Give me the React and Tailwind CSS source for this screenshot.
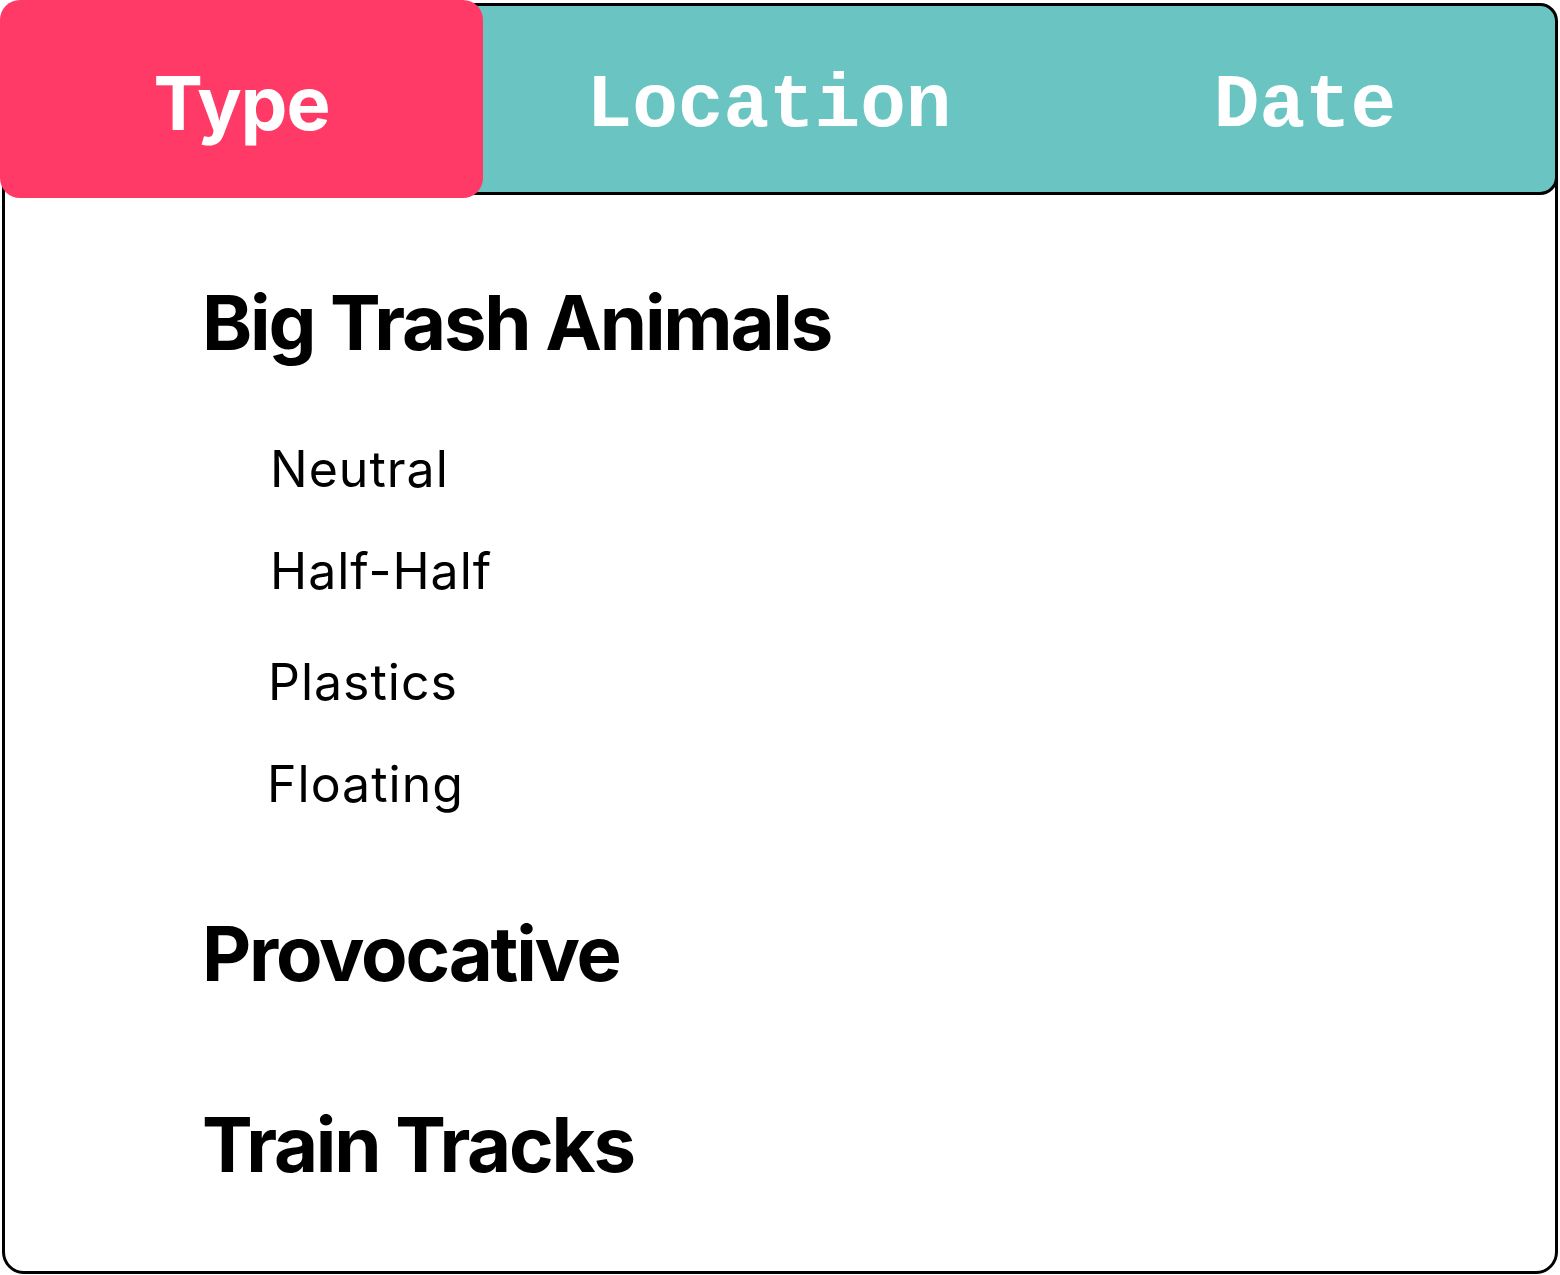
import React from 'react';

const tabs = [
  { label: "Type", width: "w-[483px]", active: true },
  { label: "Location", width: "w-[572px]" },
  { label: "Date", width: "flex-1" },
];

const subItems = [
  { label: "Neutral", cls: "mt-[84px] ml-[68px]" },
  { label: "Half-Half", cls: "mt-[52px] ml-[68px]" },
  { label: "Plastics", cls: "mt-[61px] ml-[66px]" },
  { label: "Floating", cls: "mt-[52px] ml-[65px]" },
];

const heading = "text-[76px] leading-none font-bold tracking-[-2.2px] text-black font-['Inter',sans-serif]";
const item = "text-[50px] leading-none font-normal tracking-[1px] text-black font-['Inter',sans-serif]";

export default function App() {
  return (
    <div className="w-[1560px] h-[1275px] bg-white pt-[3px] px-[2px] pb-[1px]">
      <div className="h-full border-[3px] border-black rounded-[22px] bg-white flex flex-col">
        {/* tab bar */}
        <div className="-m-[3px] h-[192px] border-[3px] border-black rounded-[18px] bg-[#6ac4c1] flex">
          {tabs.map(t =>
            t.active ? (
              <div
                key={t.label}
                className="-ml-[5px] -mt-[6px] h-[198px] w-[483px] shrink-0 rounded-[20px] bg-[#ff3a66] flex items-center justify-center pt-[8px]"
              >
                <span className="text-white text-[74px] font-bold leading-none tracking-[-1px] font-['Inter',sans-serif]">{t.label}</span>
              </div>
            ) : (
              <div key={t.label} className={`${t.width} flex items-center justify-center pt-[14px]`}>
                <span className="text-white text-[76px] font-bold leading-none font-['Liberation_Mono',monospace]">{t.label}</span>
              </div>
            )
          )}
        </div>

        {/* list */}
        <div className="pl-[197px] flex flex-col items-start">
          <h2 className={`${heading} mt-[92px]`}>Big Trash Animals</h2>
          {subItems.map(s => (
            <div key={s.label} className={`${item} ${s.cls}`}>{s.label}</div>
          ))}
          <h2 className={`${heading} mt-[106px]`}>Provocative</h2>
          <h2 className={`${heading} mt-[115px]`}>Train Tracks</h2>
        </div>
      </div>
    </div>
  );
}
